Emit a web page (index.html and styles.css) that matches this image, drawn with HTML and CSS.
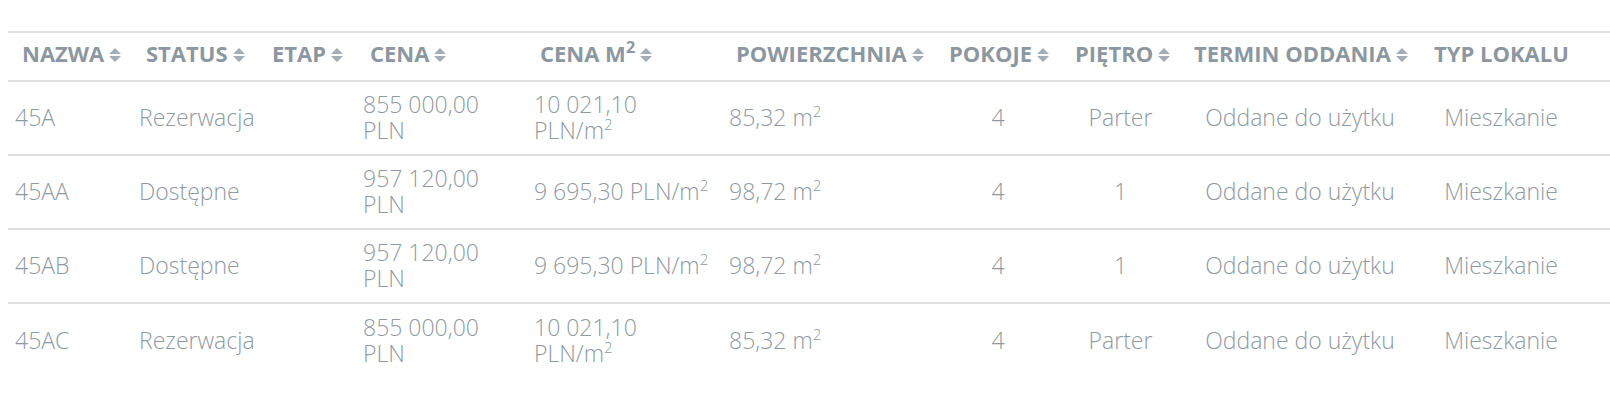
FILE: index.html
```html
<!DOCTYPE html>
<html lang="pl">

<head>
  <meta name="viewport" content="width=device-width, initial-scale=1.0" />
  <title>Lokale</title>

  <link rel="stylesheet" href="styles.css">

</head>

<body>

  <table class="flats">
    <colgroup>
      <col class="c-name">
      <col class="c-status">
      <col class="c-stage">
      <col class="c-price">
      <col class="c-price-m">
      <col class="c-area">
      <col class="c-rooms">
      <col class="c-floor">
      <col class="c-date">
      <col class="c-type">
    </colgroup>
    <thead>
      <tr>
        <th><span class="sort">Nazwa</span></th>
        <th><span class="sort">Status</span></th>
        <th><span class="sort">Etap</span></th>
        <th><span class="sort">Cena</span></th>
        <th><span class="sort">Cena m<sup>2</sup></span></th>
        <th><span class="sort">Powierzchnia</span></th>
        <th><span class="sort">Pokoje</span></th>
        <th><span class="sort">Piętro</span></th>
        <th><span class="sort">Termin oddania</span></th>
        <th>Typ lokalu</th>
      </tr>
    </thead>
    <tbody>
      <tr>
        <td>45A</td>
        <td>Rezerwacja</td>
        <td></td>
        <td>855 000,00 PLN</td>
        <td class="per-m">10 021,10 PLN/m<sup>2</sup></td>
        <td>85,32 m<sup>2</sup></td>
        <td class="mid">4</td>
        <td class="mid">Parter</td>
        <td class="mid">Oddane do użytku</td>
        <td class="mid last">Mieszkanie</td>
      </tr>
      <tr>
        <td>45AA</td>
        <td>Dostępne</td>
        <td></td>
        <td>957 120,00 PLN</td>
        <td class="per-m">9 695,30 PLN/m<sup>2</sup></td>
        <td>98,72 m<sup>2</sup></td>
        <td class="mid">4</td>
        <td class="mid">1</td>
        <td class="mid">Oddane do użytku</td>
        <td class="mid last">Mieszkanie</td>
      </tr>
      <tr>
        <td>45AB</td>
        <td>Dostępne</td>
        <td></td>
        <td>957 120,00 PLN</td>
        <td class="per-m">9 695,30 PLN/m<sup>2</sup></td>
        <td>98,72 m<sup>2</sup></td>
        <td class="mid">4</td>
        <td class="mid">1</td>
        <td class="mid">Oddane do użytku</td>
        <td class="mid last">Mieszkanie</td>
      </tr>
      <tr>
        <td>45AC</td>
        <td>Rezerwacja</td>
        <td></td>
        <td>855 000,00 PLN</td>
        <td class="per-m">10 021,10 PLN/m<sup>2</sup></td>
        <td>85,32 m<sup>2</sup></td>
        <td class="mid">4</td>
        <td class="mid">Parter</td>
        <td class="mid">Oddane do użytku</td>
        <td class="mid last">Mieszkanie</td>
      </tr>
    </tbody>
  </table>

</body>

</html>
```

FILE: styles.css
```css
* {
  padding: 0;
  margin: 0;
  box-sizing: border-box;
  font-family: 'Open Sans', 'DejaVu Sans', sans-serif;
}

body {
  margin: 0 0 0 8px;
  background-color: #ffffff;
}

.flats {
  width: 100%;
  margin-top: 31px;
  border-collapse: collapse;
  table-layout: fixed;
  color: #8f9aa2;
}

.c-name { width: 124px; }
.c-status { width: 126px; }
.c-stage { width: 98px; }
.c-price { width: 170px; }
.c-price-m { width: 196px; }
.c-area { width: 213px; }
.c-rooms { width: 126px; }
.c-floor { width: 119px; }
.c-date { width: 240px; }
.c-type { width: 190px; }

thead tr {
  border-top: 2px solid #e0e0e0;
  border-bottom: 2px solid #e0e0e0;
}

th {
  height: 49px;
  padding: 0 0 8px 14px;
  text-align: left;
  font-size: 22px;
  font-weight: 700;
  line-height: 30px;
  text-transform: uppercase;
  white-space: nowrap;
  color: #8c979f;
}

th sup {
  font-size: 16px;
  line-height: 0;
  vertical-align: 9px;
}

.sort::after {
  content: "";
  display: inline-block;
  width: 12px;
  height: 16px;
  margin-left: 5px;
  vertical-align: -1px;
  background: url("data:image/svg+xml,%3Csvg xmlns='http://www.w3.org/2000/svg' width='12' height='16'%3E%3Cpath d='M0 7 L6 1 L12 7 Z M0 9 L6 15 L12 9 Z' fill='%23a3adb3'/%3E%3C/svg%3E") no-repeat;
}

td {
  height: 74px;
  padding: 0 22px 2px 7px;
  font-size: 23px;
  font-weight: 300;
  line-height: 26px;
  vertical-align: middle;
}

td.per-m {
  padding-left: 8px;
  padding-right: 2px;
}

tbody tr {
  border-bottom: 2px solid #e0e0e0;
}

tbody tr:last-child {
  border-bottom: none;
}

td sup {
  font-size: 15px;
  line-height: 0;
  vertical-align: 9px;
}

td.mid {
  text-align: center;
  padding-left: 0;
  padding-right: 0;
}

td.last {
  padding-right: 28px;
}
```
